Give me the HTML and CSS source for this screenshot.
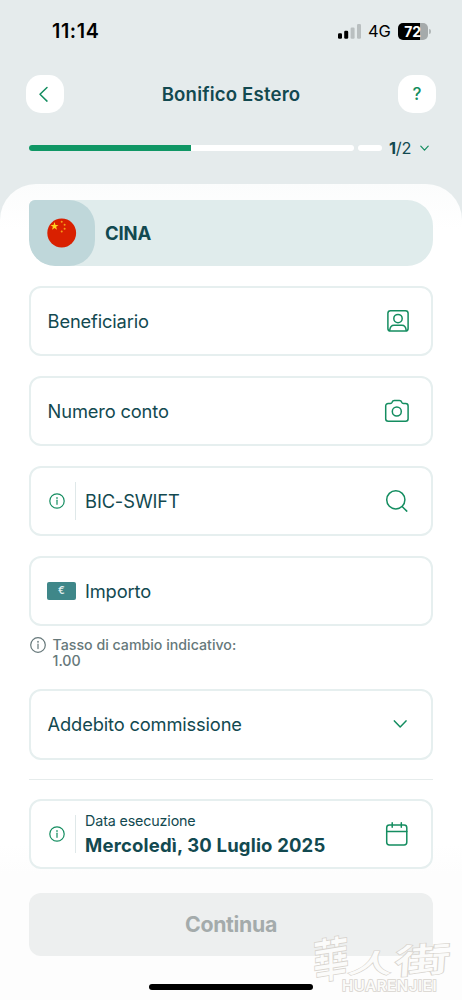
FILE: index.html
```html
<!DOCTYPE html>
<html lang="it">
<head>
<meta charset="utf-8">
<meta name="viewport" content="width=device-width, initial-scale=1">
<title>Bonifico Estero</title>
<link rel="stylesheet" href="styles.css">
</head>
<body>
<div class="screen">
  <div class="status">
    <span class="time">11:14</span>
    <div class="status-right">
      <svg class="signal" width="23" height="15" viewBox="0 0 23 15"><rect x="0" y="9.2" width="4" height="5.5" rx="1.2"/><rect x="6.2" y="6.7" width="4" height="8" rx="1.2"/><g fill="#b9bfc0"><rect x="12.6" y="3.5" width="4" height="11.2" rx="1.2"/><rect x="19" y="0" width="4" height="14.7" rx="1.2"/></g></svg>
      <span class="network">4G</span>
      <div class="battery"><span class="battery-level">72</span></div>
      <span class="battery-tip"></span>
    </div>
  </div>

  <header class="header">
    <button class="square-btn" aria-label="Indietro"><svg width="38" height="38" viewBox="0 0 38 38" class="line"><path d="M21 12.5 14 19.3l7 6.8"/></svg></button>
    <h1 class="title">Bonifico Estero</h1>
    <button class="square-btn help" aria-label="Aiuto">?</button>
  </header>

  <div class="steps">
    <span class="track"><span class="track-fill"></span></span>
    <span class="track-next"></span>
    <span class="step-count"><b>1</b>/2</span>
    <svg width="10" height="7" viewBox="0 0 10 7" class="line thin"><path d="M.8 1.2 4.5 5.2 8.2 1.2"/></svg>
  </div>

  <main class="sheet">
    <div class="country">
      <div class="flag-box">
        <svg width="30" height="30" viewBox="0 0 30 30"><circle cx="14.7" cy="15" r="14.4" fill="#d92000"/><g fill="#ffd21f"><path d="m7.5 4 1 2.9 3 .1-2.4 1.8.9 3-2.5-1.7L5 11.8l.9-3L3.5 7l3-.1z"/></g><g fill="#f5a018"><circle cx="14.7" cy="3.7" r="1"/><circle cx="17.6" cy="6.7" r="1"/><circle cx="17.6" cy="10.8" r="1"/><circle cx="14.7" cy="13.6" r="1"/></g></svg>
      </div>
      <span class="country-name">CINA</span>
    </div>

    <div class="field">
      <span class="label">Beneficiario</span>
      <svg class="icon line" width="26" height="26" viewBox="0 0 26 26"><rect x="3.9" y="2.7" width="20.2" height="20.3" rx="2.6"/><circle cx="14" cy="10.6" r="4.2"/><path d="M5.7 22.3c.4-3.5 1.9-5 4.3-5h7.9c2.4 0 3.9 1.5 4.3 5"/></svg>
    </div>

    <div class="field">
      <span class="label">Numero conto</span>
      <svg class="icon line" width="26" height="26" viewBox="0 0 26 26"><path d="M4.2 5.6h2.1c1.1 0 1.5-.4 1.8-1.3.4-1.4 1-1.9 2.3-1.9h5c1.3 0 1.9.5 2.3 1.9.3.9.7 1.3 1.8 1.3h2.1c1.6 0 2.5.9 2.5 2.5v12.6c0 1.6-.9 2.5-2.5 2.5H4.2c-1.6 0-2.5-.9-2.5-2.5V8.1c0-1.6.9-2.5 2.5-2.5z"/><circle cx="12.8" cy="13.5" r="4.5"/></svg>
    </div>

    <div class="field">
      <svg class="info" width="18" height="18" viewBox="0 0 18 18"><circle cx="9" cy="9" r="7.2"/><path d="M9 8.2v4.1"/><path d="M9 5.6v.9"/></svg>
      <span class="separator"></span>
      <span class="label">BIC-SWIFT</span>
      <svg class="icon line" width="26" height="26" viewBox="0 0 26 26"><circle cx="11.8" cy="11.8" r="9.1"/><path d="m18.1 18.5 4.7 4.6"/></svg>
    </div>

    <div class="field">
      <span class="money">€</span>
      <span class="label">Importo</span>
    </div>

    <div class="rate">
      <svg class="info muted" width="18" height="18" viewBox="0 0 18 18"><circle cx="9" cy="9" r="7.3"/><path d="M9 8v4.6"/><path d="M9 5.3v1"/></svg>
      <p class="rate-text">Tasso di cambio indicativo:<br>1.00</p>
    </div>

    <div class="field">
      <span class="label">Addebito commissione</span>
      <svg class="icon line drop" width="14" height="10" viewBox="0 0 14 10"><path d="M1.4 1.9 7.2 8l5.8-6.1"/></svg>
    </div>

    <div class="rule"></div>

    <div class="field">
      <svg class="info" width="18" height="18" viewBox="0 0 18 18"><circle cx="9" cy="9" r="7.2"/><path d="M9 8.2v4.1"/><path d="M9 5.6v.9"/></svg>
      <span class="separator"></span>
      <div class="date">
        <span class="date-label">Data esecuzione</span>
        <span class="date-value">Mercoledì, 30 Luglio 2025</span>
      </div>
      <svg class="icon line" width="26" height="26" viewBox="0 0 26 26"><rect x="2.7" y="4" width="20.1" height="20" rx="2.7"/><path d="M2.7 10.5h20.1M8.2 1.8v4.4M17.3 1.8v4.4"/></svg>
    </div>

    <button class="submit">Continua</button>
    <div class="home"></div>
  </main>

  <div class="watermark" aria-hidden="true">
    <span class="mark-cn"><i class="hua">華</i><i class="ren">人</i><i class="jie">街</i></span>
    <span class="mark-en">HUARENJIEI</span>
  </div>
</div>
</body>
</html>
```
FILE: styles.css
```css
* { box-sizing: border-box; }
body { margin: 0; font-family: Inter, "Liberation Sans", sans-serif; color: #124950; }
button { border: 0; padding: 0; font: inherit; }
svg { display: block; flex: none; }

.screen {
  position: relative;
  width: 462px;
  height: 1000px;
  overflow: hidden;
  background: #e5ebec;
  display: flex;
  flex-direction: column;
}

.line { fill: none; stroke: #148d60; stroke-width: 1.5; stroke-linecap: round; stroke-linejoin: round; }
.thin { stroke-width: 1.2; }

/* Status bar */
.status {
  height: 62px;
  padding: 0 31px 0 52px;
  display: flex;
  align-items: center;
  justify-content: space-between;
  color: #000;
}
.time { font-size: 19.7px; font-weight: 600; letter-spacing: .6px; }
.status-right { display: flex; align-items: center; }
.network { margin-left: 7px; width: 30px; font-size: 16.5px; letter-spacing: -.1px; }
.battery {
  width: 30px;
  height: 17px;
  border-radius: 5px;
  background: linear-gradient(90deg, #000 72%, #a5aaab 72%);
  text-align: center;
  line-height: 17px;
}
.battery-level { display: block; margin-left: -1px; color: #fff; font-size: 14px; font-weight: 700; letter-spacing: -.3px; }
.battery-tip { width: 2px; height: 5px; margin-left: 1px; border-radius: 0 2px 2px 0; background: #b2b8b9; }

/* Header */
.header {
  height: 64px;
  padding: 0 26px;
  display: flex;
  align-items: center;
  justify-content: space-between;
}
.square-btn { width: 38px; height: 38px; border-radius: 15px; background: #fff; color: #148d60; font-size: 17px; font-weight: 500; }
.title { margin: 0; font-size: 18.6px; font-weight: 600; letter-spacing: .18px; }

.steps { height: 44px; padding-left: 28.5px; display: flex; align-items: center; }
.track { width: 325px; height: 6px; border-radius: 3px; background: #fff; overflow: hidden; }
.track-fill { display: block; width: 162.5px; height: 6px; background: #109765; }
.track-next { width: 24px; height: 6px; margin-left: 4.5px; border-radius: 3px; background: #fff; }
.step-count { width: 31px; margin-left: 7px; font-size: 16.3px; letter-spacing: -.2px; }
.step-count b { font-weight: 700; }

/* Form sheet */
.sheet {
  flex: 1;
  margin-top: 13.5px;
  padding: 16.5px 29px 0;
  border-radius: 36px 36px 0 0;
  background: linear-gradient(#fbfcfc, #fff 45px, #fff 660px, #fdfdfd 690px);
}
.country { height: 66px; border-radius: 6px 26px 26px 26px; background: #e0ecec; display: flex; align-items: center; overflow: hidden; }
.flag-box { width: 66px; height: 66px; border-radius: 4px 26px 26px 26px; background: #bfd7da; display: flex; align-items: center; justify-content: center; }
.country-name { margin-left: 10px; font-size: 18.5px; font-weight: 700; letter-spacing: -.2px; }

.field {
  height: 70.5px;
  margin-top: 19.5px;
  padding: 0 21px 0 16.6px;
  border: 2px solid #e6efef;
  border-radius: 12px;
  background: #fff;
  display: flex;
  align-items: center;
}
.label { font-size: 18.3px; letter-spacing: -.15px; white-space: nowrap; }
.icon { margin-left: auto; }
.drop { margin-right: 3px; }
.info { fill: none; stroke: #148d60; stroke-width: 1.2; stroke-linecap: round; }
.info.muted { stroke: #66787a; }
.separator { width: 1px; height: 38px; margin: 0 9.5px 0 9px; background: #dfe8e9; }
.money { width: 29px; height: 18px; margin: 0 9px 0 -.6px; border-radius: 2px; background: #3f8789; color: #e2efef; font-size: 10px; font-weight: 600; line-height: 17px; text-align: center; }
.rate { height: 43.5px; padding-top: 10px; display: flex; align-items: flex-start; }
.rate-text { margin: .5px 0 0 5.5px; font-size: 14.2px; font-weight: 500; line-height: 16.5px; color: #66787a; }
.rule { height: 1px; margin-top: 19px; background: #e6ecec; }
.rule + .field { margin-top: 19px; }
.date { padding-top: 2px; display: flex; flex-direction: column; white-space: nowrap; }
.date-label { font-size: 14.3px; line-height: 20px; letter-spacing: -.15px; }
.date-value { margin-top: 2px; font-size: 18.5px; line-height: 25px; font-weight: 700; letter-spacing: .17px; }

.submit { display: block; width: 404px; height: 63.5px; margin-top: 23.5px; border-radius: 12px; background: #edefef; color: #a4abab; font-size: 21.3px; font-weight: 700; line-height: 61px; letter-spacing: -.3px; }
.home { width: 164px; height: 6px; margin: 28px auto 0; border-radius: 3px; background: #000; }

/* Site mark laid over the bottom right corner */
.watermark { position: absolute; left: 312px; top: 932px; width: 150px; color: #fbfbfa; -webkit-text-stroke: 1.6px #d8d4ce; paint-order: stroke fill; }
.mark-cn { display: flex; height: 47px; font-family: "Noto Sans CJK TC", sans-serif; font-weight: 500; }
.mark-cn i { display: block; font-style: normal; font-size: 40px; line-height: 46px; width: 40px; }
.mark-cn .hua { transform: translate(-1px, 2px) rotate(-9deg) skewX(-8deg) scale(.9, 1.15); }
.mark-cn .ren { transform: translate(1px, 7px) scale(1.12, .65) skewX(-12deg); }
.mark-cn .jie { margin-left: 12px; transform: translate(-1px, 3px) rotate(-4deg) skewX(-8deg) scale(1.4, .85); }
.mark-en { display: block; margin-left: 30px; font-size: 15px; line-height: 14px; font-weight: 600; letter-spacing: .6px; }
```
